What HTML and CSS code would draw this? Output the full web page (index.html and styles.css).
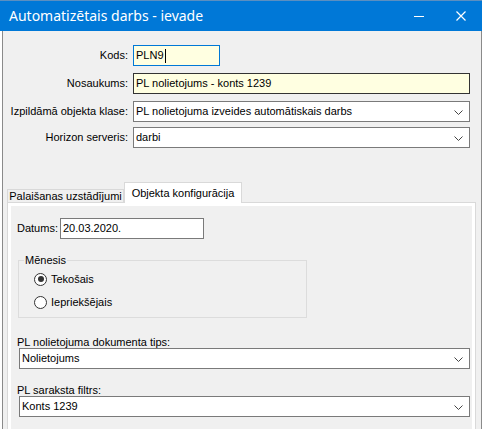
FILE: index.html
```html
<!DOCTYPE html>
<html lang="lv">
<head>
    <meta charset="UTF-8">
    <title>Automatizētais darbs - ievade</title>
    <link rel="stylesheet" href="styles.css">
</head>
<body>
    <div class="window">
        <div class="titlebar">
            <span class="title">Automatizētais darbs - ievade</span>
            <span class="controls">
                <svg class="btn-min" width="10" height="10" viewBox="0 0 10 10"><path d="M0 5.5h10" stroke="#fff" stroke-width="1"/></svg>
                <svg class="btn-close" width="10" height="10" viewBox="0 0 10 10"><path d="M0.5 0.5l9 9M9.5 0.5l-9 9" stroke="#fff" stroke-width="1.2"/></svg>
            </span>
        </div>
        <div class="client">
            <div class="form-grid">
                <label class="lbl">Kods:</label>
                <div class="textbox focused short">PLN9<span class="caret"></span></div>

                <label class="lbl gap7">Nosaukums:</label>
                <div class="textbox dark gap7">PL nolietojums - konts 1239</div>

                <label class="lbl gap7">Izpildāmā objekta klase:</label>
                <div class="combo gap7">PL nolietojuma izveides automātiskais darbs
                    <svg class="chev" width="9" height="5" viewBox="0 0 9 5"><path d="M0.5 0.5l4 4 4-4" fill="none" stroke="#444" stroke-width="1"/></svg>
                </div>

                <label class="lbl gap5">Horizon serveris:</label>
                <div class="combo gap5">darbi
                    <svg class="chev" width="9" height="5" viewBox="0 0 9 5"><path d="M0.5 0.5l4 4 4-4" fill="none" stroke="#444" stroke-width="1"/></svg>
                </div>
            </div>

            <div class="tabs">
                <div class="tab-strip">
                    <div class="tab">Palaišanas uzstādījumi</div>
                    <div class="tab active">Objekta konfigurācija</div>
                </div>
                <div class="tab-page">
                    <div class="page-inner">
                        <div class="datums-row">
                            <span class="lbl-inline">Datums:</span>
                            <div class="textbox plain date">20.03.2020.</div>
                        </div>

                        <div class="group">
                            <span class="legend">Mēnesis</span>
                            <div class="radio-row">
                                <span class="radio checked"></span>
                                <span>Tekošais</span>
                            </div>
                            <div class="radio-row">
                                <span class="radio"></span>
                                <span>Iepriekšējais</span>
                            </div>
                        </div>

                        <div class="field-label">PL nolietojuma dokumenta tips:</div>
                        <div class="combo wide">Nolietojums
                            <svg class="chev" width="9" height="5" viewBox="0 0 9 5"><path d="M0.5 0.5l4 4 4-4" fill="none" stroke="#444" stroke-width="1"/></svg>
                        </div>

                        <div class="field-label second">PL saraksta filtrs:</div>
                        <div class="combo wide">Konts 1239
                            <svg class="chev" width="9" height="5" viewBox="0 0 9 5"><path d="M0.5 0.5l4 4 4-4" fill="none" stroke="#444" stroke-width="1"/></svg>
                        </div>
                    </div>
                </div>
            </div>
        </div>
    </div>
</body>
</html>
```

FILE: styles.css
```css
body {
    margin: 0;
    padding: 0;
    background-color: #ffffff;
    font-family: "Liberation Sans", Arial, sans-serif;
    font-size: 11px;
    line-height: 13px;
    color: #000;
}
.window {
    width: 482px;
    height: 429px;
    overflow: hidden;
}
.titlebar {
    height: 31px;
    background-color: #0078d7;
    border-top: 1px solid #5c8fc0;
    box-sizing: border-box;
    display: flex;
    align-items: center;
    justify-content: space-between;
    color: #fff;
}
.title {
    font-family: "Noto Sans", sans-serif;
    font-size: 14px;
    line-height: 18px;
    padding-left: 9px;
    margin-top: -1px;
}
.controls {
    display: flex;
    align-items: center;
    gap: 32px;
    padding-right: 16px;
}
.client {
    margin-left: 2px;
    width: 478px;
    height: 398px;
    background-color: #f0f0f0;
    border-left: 1px solid #8a8a8a;
    border-right: 1px solid #8a8a8a;
}
.form-grid {
    display: grid;
    grid-template-columns: 125px 337px;
    column-gap: 5px;
    padding-top: 14px;
    align-items: center;
}
.lbl {
    text-align: right;
    white-space: nowrap;
}
.gap7 {
    margin-top: 7px;
}
.gap5 {
    margin-top: 5px;
}
.textbox, .combo {
    height: 21px;
    box-sizing: border-box;
    border: 1px solid #7a7a7a;
    background-color: #fff;
    padding-left: 2px;
    display: flex;
    align-items: center;
    position: relative;
    white-space: nowrap;
}
.textbox {
    background-color: #ffffe1;
}
.textbox.focused {
    border-color: #0078d7;
}
.textbox.short {
    width: 87px;
}
.textbox.dark {
    border-color: #333;
}
.textbox.plain {
    background-color: #fff;
}
.caret {
    display: inline-block;
    width: 1px;
    height: 14px;
    background-color: #000;
    margin-left: 1px;
}
.chev {
    position: absolute;
    right: 6px;
    top: 8px;
}
.tabs {
    margin-top: 34px;
    margin-left: 4px;
    width: 469px;
}
.tab-strip {
    display: flex;
    align-items: flex-end;
    height: 20px;
    position: relative;
    z-index: 1;
}
.tab {
    width: 117px;
    height: 13px;
    line-height: 12px;
    box-sizing: border-box;
    text-align: center;
    white-space: nowrap;
    border: 1px solid #d9d9d9;
    border-bottom: none;
    background-color: #f0f0f0;
}
.tab.active {
    width: 118px;
    height: 21px;
    line-height: 20px;
    background-color: #fff;
    margin-bottom: -1px;
}
.tab-page {
    border: 1px solid #d9d9d9;
    background-color: #fff;
    padding: 3px 3px 0 3px;
    height: 240px;
}
.page-inner {
    background-color: #f0f0f0;
    height: 100%;
    padding: 12px 0 0 6px;
    box-sizing: border-box;
}
.datums-row {
    display: flex;
    align-items: center;
    gap: 2px;
}
.textbox.date {
    width: 144px;
}
.group {
    position: relative;
    margin-top: 21px;
    margin-left: 1px;
    width: 289px;
    height: 58px;
    box-sizing: border-box;
    border: 1px solid #dcdcdc;
    padding: 9px 0 0 15px;
}
.legend {
    position: absolute;
    top: -7px;
    left: 5px;
    background-color: #f0f0f0;
    padding: 0 1px;
}
.radio-row {
    display: flex;
    align-items: center;
    gap: 4px;
    height: 18px;
    margin-bottom: 5px;
}
.radio {
    width: 13px;
    height: 13px;
    box-sizing: border-box;
    border: 1px solid #333;
    border-radius: 50%;
    background-color: #fff;
    position: relative;
}
.radio.checked::after {
    content: "";
    position: absolute;
    left: 2.5px;
    top: 2.5px;
    width: 6px;
    height: 6px;
    border-radius: 50%;
    background-color: #333;
}
.field-label {
    margin-top: 18px;
    height: 12px;
    line-height: 12px;
}
.field-label.second {
    margin-top: 15px;
}
.combo.wide {
    width: 451px;
    margin-left: 2px;
}
```
